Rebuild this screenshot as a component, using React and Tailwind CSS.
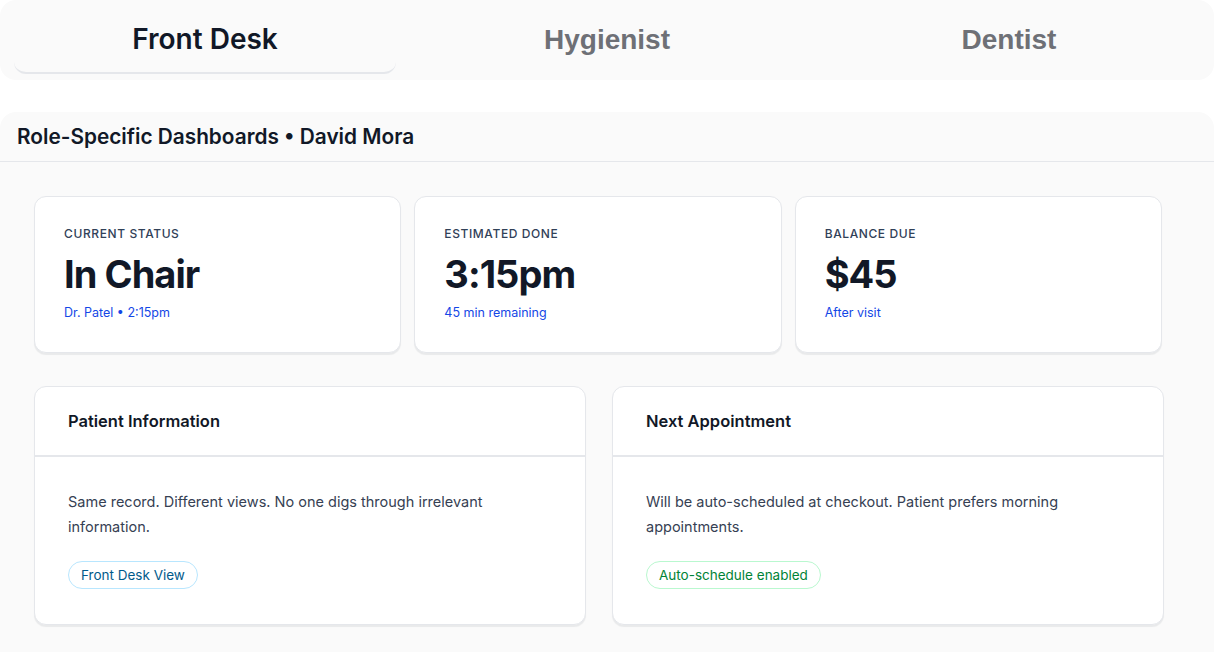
import React, { useState } from "react";

const tabs = ["Front Desk", "Hygienist", "Dentist"];

const stats = [
  { label: "Current Status", value: "In Chair", sub: "Dr. Patel • 2:15pm" },
  { label: "Estimated Done", value: "3:15pm", sub: "45 min remaining" },
  { label: "Balance Due", value: "$45", sub: "After visit" },
];

const App = () => {
  const [active, setActive] = useState(0);

  return (
    <div className="min-h-screen bg-white text-gray-900 font-['Inter','Noto_Sans',sans-serif]">
      {/* Role tabs */}
      <div className="h-20 rounded-2xl bg-[#fafafa] grid grid-cols-3 px-[4px]">
        {tabs.map((tab, i) => (
          <button
            key={tab}
            onClick={() => setActive(i)}
            className={
              i === active
                ? "mx-[10px] h-[74px] pt-[6px] rounded-xl border-b-2 border-gray-200 text-[28px] font-semibold text-[#111827]"
                : "h-[74px] pt-[6px] text-[28px] font-bold text-[#6e7076] font-['Liberation_Sans',Arial,sans-serif]"
            }
          >
            {tab}
          </button>
        ))}
      </div>

      {/* Dashboard panel */}
      <div className="mt-8 rounded-t-2xl bg-[#fafafa]">
        <div className="h-[50px] flex items-center px-[17px] border-b border-gray-200">
          <h1 className="text-[20.8px] font-semibold text-[#111827]">
            Role-Specific Dashboards • David Mora
          </h1>
        </div>

        <div className="pl-[34px] pt-[34px] pb-[28px]">
          <div className="w-[1128px] grid grid-cols-3 gap-[13px]">
            {stats.map((s) => (
              <div
                key={s.label}
                className="h-[157px] rounded-xl border border-gray-200 bg-white shadow-[0_2px_1px_rgba(15,23,42,0.07)] pl-[29px] pt-[29px]"
              >
                <div className="text-xs leading-4 uppercase tracking-[0.05em] font-medium text-slate-700">
                  {s.label}
                </div>
                <div className="mt-[12px] text-[38px] leading-[40px] font-bold tracking-[-0.025em] text-[#111827]">
                  {s.value}
                </div>
                <div className="mt-[11px] text-[12.5px] leading-4 text-blue-700">
                  {s.sub}
                </div>
              </div>
            ))}
          </div>

          <div className="w-[1130px] mt-[33px] grid grid-cols-2 gap-[26px]">
            <div className="rounded-xl border border-gray-200 bg-white shadow-[0_2px_1px_rgba(15,23,42,0.07)]">
              <div className="px-[33px] py-[22px] border-b-2 border-gray-200 text-[16.5px] leading-6 font-semibold text-[#111827]">
                Patient Information
              </div>
              <div className="px-[33px] pt-[32px] pb-[35px]">
                <p className="text-[14.5px] leading-[25px] text-gray-700 pr-[60px]">
                  Same record. Different views. No one digs through irrelevant
                  information.
                </p>
                <span className="inline-block mt-[22px] rounded-full border border-sky-200 px-[12px] py-[4px] text-[13.5px] leading-[18px] text-sky-800">
                  Front Desk View
                </span>
              </div>
            </div>

            <div className="rounded-xl border border-gray-200 bg-white shadow-[0_2px_1px_rgba(15,23,42,0.07)]">
              <div className="px-[33px] py-[22px] border-b-2 border-gray-200 text-[16.5px] leading-6 font-semibold text-[#111827]">
                Next Appointment
              </div>
              <div className="px-[33px] pt-[32px] pb-[35px]">
                <p className="text-[14.5px] leading-[25px] text-gray-700 pr-[60px]">
                  Will be auto-scheduled at checkout. Patient prefers morning
                  appointments.
                </p>
                <span className="inline-block mt-[22px] rounded-full border border-green-200 px-[12px] py-[4px] text-[13.5px] leading-[18px] text-green-700">
                  Auto-schedule enabled
                </span>
              </div>
            </div>
          </div>
        </div>
      </div>
    </div>
  );
};

export default App;
